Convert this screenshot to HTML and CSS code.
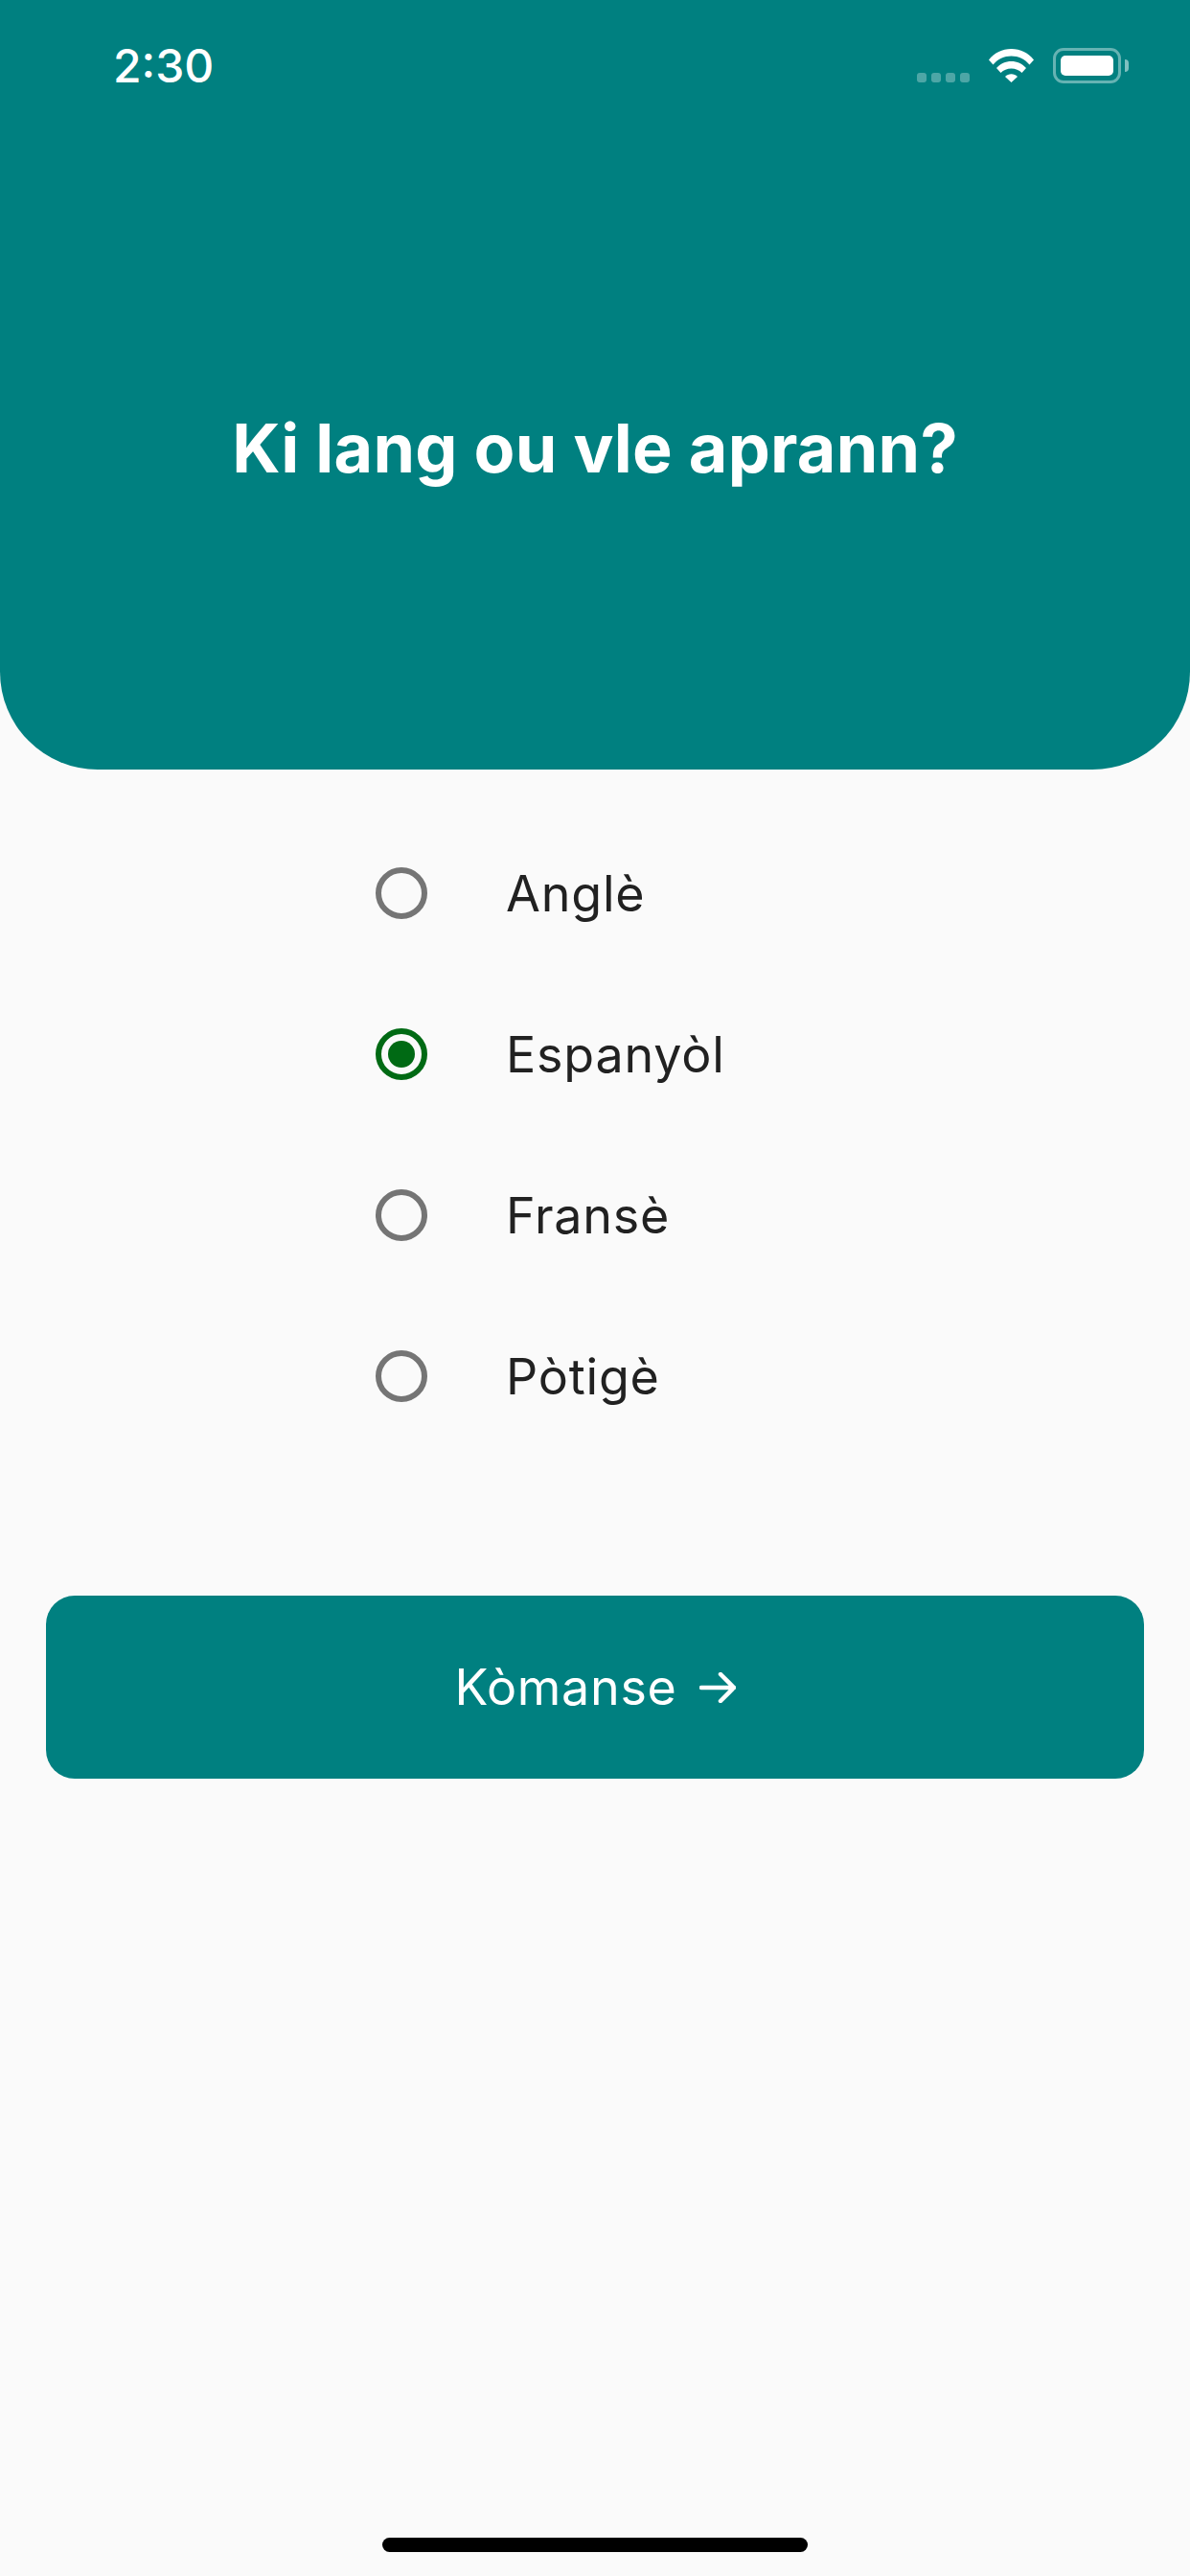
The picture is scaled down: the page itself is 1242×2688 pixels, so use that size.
FILE: index.html
```html
<!DOCTYPE html>
<html lang="en">
<head>
    <meta charset="UTF-8">
    <meta name="viewport" content="width=device-width, initial-scale=1.0">
    <title>Ki lang ou vle aprann?</title>
    <link rel="stylesheet" href="styles.css">
</head>
<body>
    <div class="screen">
        <!-- Teal header with status bar -->
        <div class="header">
            <div class="status-bar">
                <span class="time">2:30</span>
                <div class="status-icons">
                    <div class="signal"><i></i><i></i><i></i><i></i></div>
                    <svg class="wifi" viewBox="0 0 47 36">
                        <path d="M0 12.5C6 5 14 1 23.5 1S41 5 47 12.5L42.5 17.500C37.500 11.500 31 8.500 23.500 8.500S9.500 11.500 4.500 17.500Z" fill="#fff"/>
                        <path d="M8 21C12 16.500 17.500 14 23.500 14S35 16.500 39 21L34.500 26C31.500 23 27.800 21.500 23.500 21.500S15.500 23 12.500 26Z" fill="#fff"/>
                        <path d="M17 30C18.800 28.300 21 27.300 23.500 27.300S28.200 28.300 30 30L23.500 36Z" fill="#fff"/>
                    </svg>
                    <div class="battery"><div class="battery-fill"></div></div>
                    <div class="battery-cap"></div>
                </div>
            </div>
            <h1 class="title">Ki lang ou vle aprann?</h1>
        </div>
        <!-- Language options -->
        <div class="options">
            <div class="option"><span class="radio"></span><span class="option-label">Anglè</span></div>
            <div class="option"><span class="radio selected"></span><span class="option-label">Espanyòl</span></div>
            <div class="option"><span class="radio"></span><span class="option-label">Fransè</span></div>
            <div class="option"><span class="radio"></span><span class="option-label">Pòtigè</span></div>
        </div>
        <button class="start-button">
            <span>Kòmanse</span>
            <svg class="arrow" viewBox="0 0 38 32">
                <path d="M2 16H36M22 2L36 16L22 30" fill="none" stroke="#fff" stroke-width="4.5" stroke-linecap="round" stroke-linejoin="round"/>
            </svg>
        </button>
        <div class="home-indicator"></div>
    </div>
</body>
</html>
```

FILE: styles.css
```css
* {
    box-sizing: border-box;
}
body {
    margin: 0;
    font-family: Inter, "Noto Sans", sans-serif;
    background: #fafafa;
}
.screen {
    width: 1242px;
    height: 2688px;
    display: flex;
    flex-direction: column;
    overflow: hidden;
}
/* Header */
.header {
    height: 803px;
    background: #008080;
    border-radius: 0 0 102px 102px;
    color: white;
}
.status-bar {
    display: flex;
    justify-content: space-between;
    align-items: flex-start;
    padding: 50px 64px 0 118px;
    height: 100px;
}
.time {
    font-size: 48px;
    line-height: 38px;
    font-weight: 550;
}
.status-icons {
    display: flex;
    align-items: flex-start;
}
.signal {
    display: flex;
    gap: 5px;
    margin: 26px 20px 0 0;
}
.signal i {
    width: 10px;
    height: 10px;
    border-radius: 3px;
    background: rgba(255, 255, 255, 0.3);
}
.wifi {
    width: 47px;
    height: 36px;
    margin-right: 20px;
}
.battery {
    width: 71px;
    height: 37px;
    padding: 5px;
    border: 3px solid rgba(255, 255, 255, 0.4);
    border-radius: 11px;
}
.battery-fill {
    height: 100%;
    background: white;
    border-radius: 5px;
}
.battery-cap {
    width: 4px;
    height: 13px;
    margin: 12px 0 0 4px;
    border-radius: 0 4px 4px 0;
    background: rgba(255, 255, 255, 0.5);
}
.title {
    margin: 0;
    padding-top: 326px;
    font-size: 70px;
    line-height: 84px;
    font-weight: 700;
    letter-spacing: 0.25px;
    text-align: center;
}
/* Options */
.options {
    display: flex;
    flex-direction: column;
    gap: 68px;
    padding: 79px 0 0 392px;
}
.option {
    display: flex;
    align-items: center;
    gap: 82px;
    height: 100px;
}
.radio {
    width: 54px;
    height: 54px;
    border: 6px solid #757575;
    border-radius: 50%;
    padding: 7px;
}
.radio.selected {
    border-color: #006a14;
}
.radio.selected::after {
    content: "";
    display: block;
    width: 28px;
    height: 28px;
    border-radius: 50%;
    background: #006a14;
}
.option-label {
    font-size: 52px;
    letter-spacing: 0.8px;
    color: #212121;
}
/* Button */
.start-button {
    margin: 179px 48px 0;
    height: 191px;
    display: flex;
    align-items: center;
    justify-content: center;
    gap: 23px;
    background: #008080;
    color: white;
    border: none;
    border-radius: 30px;
    font-family: inherit;
    font-size: 52px;
    letter-spacing: 0.7px;
}
.arrow {
    width: 38px;
    height: 32px;
}
.home-indicator {
    width: 444px;
    height: 15px;
    margin: 792px auto 0;
    background: black;
    border-radius: 8px;
}
```
